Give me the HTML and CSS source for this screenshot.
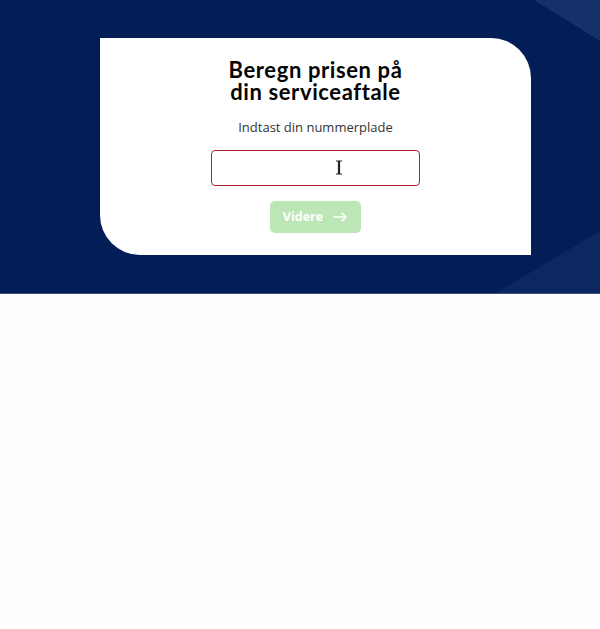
FILE: index.html
```html
<!DOCTYPE html>
<html lang="da">
<head>
<meta charset="utf-8">
<link rel="stylesheet" href="styles.css">
</head>
<body>
<section class="hero">
  <div class="card">
    <h1 class="title">Beregn prisen på<br>din serviceaftale</h1>
    <p class="subtitle">Indtast din nummerplade</p>
    <div class="field">
      <input class="plate" type="text" aria-label="Nummerplade">
      <svg class="ibeam" width="8" height="15" viewBox="0 0 8 15"><path d="M1 1h2.5v13H1M7 1H4.5v13H7" fill="none" stroke="#222" stroke-width="1.2"/></svg>
    </div>
    <button class="btn" type="button">Videre <span class="arrow"><svg width="15" height="10" viewBox="0 0 15 10"><path d="M1 5h12M9 1l4 4-4 4" fill="none" stroke="#fff" stroke-width="1.6" stroke-linecap="round" stroke-linejoin="round"/></svg></span></button>
  </div>
</section>
</body>
</html>
```
FILE: styles.css
```css
* { box-sizing: border-box; }
html, body { margin: 0; background: #fffdff; }
body { font-family: "Open Sans", sans-serif; }
.hero {
  height: 294px;
  padding-top: 38px;
  background: #031d56;
  border-bottom: 1px solid #3a4c78;
  position: relative;
  overflow: hidden;
}
.hero::before {
  content: "";
  position: absolute;
  right: 0; top: 0;
  width: 66px; height: 41px;
  background: #143169;
  clip-path: polygon(0 0, 100% 0, 100% 100%);
}
.hero::after {
  content: "";
  position: absolute;
  right: 0; bottom: 0;
  width: 104px; height: 62px;
  background: #0c2861;
  clip-path: polygon(100% 0, 100% 100%, 0 100%);
}
.card {
  position: relative;
  z-index: 1;
  width: 431px;
  height: 217px;
  margin-left: 100px;
  background: #fff;
  border-radius: 0 40px 0 40px;
  display: flex;
  flex-direction: column;
  align-items: center;
  padding-top: 21px;
}
.title {
  margin: 0;
  font-family: "Lato", "Noto Sans", sans-serif;
  font-weight: 700;
  font-size: 22px;
  line-height: 22px;
  color: #050505;
  text-align: center;
  letter-spacing: 0.6px;
}
.subtitle {
  margin: 15px 0 0;
  font-size: 13px;
  line-height: 18px;
  color: #333;
}
.field {
  position: relative;
  margin-top: 14px;
  width: 209px;
  height: 36px;
}
.plate {
  display: block;
  width: 100%;
  height: 100%;
  border: 1px solid #b3202f;
  border-radius: 4px;
  outline: none;
  background: #fff;
}
.ibeam {
  position: absolute;
  left: 124px;
  top: 10px;
}
.btn {
  margin-top: 15px;
  width: 91px;
  height: 32px;
  border: 0;
  border-radius: 5px;
  background: #bde6b7;
  color: #fff;
  font-family: "Open Sans", sans-serif;
  font-weight: 700;
  font-size: 12.5px;
  display: flex;
  align-items: center;
  justify-content: center;
  gap: 10px;
  padding: 0 0 1px;
}
.arrow { display: flex; }
```
